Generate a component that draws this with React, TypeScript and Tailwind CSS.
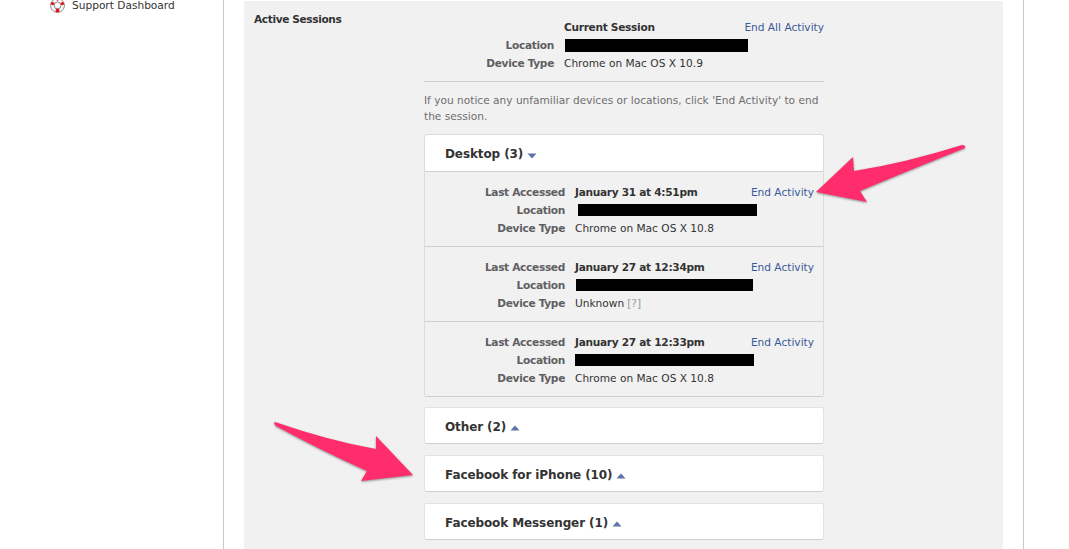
import React from "react";

const font = { fontFamily: '"DejaVu Sans", sans-serif' };

const Row = ({ label, children, labelW }: { label: string; children: React.ReactNode; labelW: string }) => (
  <div className="flex h-[18px] items-center">
    <div className={`${labelW} shrink-0 pr-[10px] text-right font-bold tracking-[-0.32px] text-[#5f5f63]`}>{label}</div>
    <div className="min-w-0 flex-1 text-[#333]">{children}</div>
  </div>
);

const Redacted = ({ w, ml, h = "h-[12px]" }: { w: string; ml: string; h?: string }) => (
  <div className={`${w} ${ml} ${h} bg-black`} />
);

const Caret = ({ up }: { up?: boolean }) => (
  <svg width="10" height="6" viewBox="0 0 10 6" className="ml-[4px] mt-[3px]">
    <path d={up ? "M5 0.5L9.5 5.5H0.5Z" : "M0.5 0.5H9.5L5 5.5Z"} fill="#5f73aa" />
  </svg>
);

const CardHeader = ({ title, up, h }: { title: string; up?: boolean; h: string }) => (
  <div className={`flex ${h} items-center pl-[20px] pt-[2px] text-[12px] font-bold tracking-[-0.1px] text-[#333]`}>
    {title}
    <Caret up={up} />
  </div>
);

const Session = ({
  when,
  redact,
  device,
  unknown,
  last,
}: {
  when: string;
  redact: React.ReactNode;
  device: string;
  unknown?: boolean;
  last?: boolean;
}) => (
  <div className={`relative pt-[11px] ${last ? "h-[74px]" : "h-[75px] border-b border-[#cfcfcf]"}`}>
    <Row label="Last Accessed" labelW="w-[150px]">
      <span className="font-bold tracking-[-0.3px]">{when}</span>
    </Row>
    <Row label="Location" labelW="w-[150px]">
      {redact}
    </Row>
    <Row label="Device Type" labelW="w-[150px]">
      {device}
      {unknown && <span className="ml-[3px] text-[#999]">[?]</span>}
    </Row>
    <a className="absolute right-[9px] top-[11px] leading-[18px] text-[#3b5998]">End Activity</a>
  </div>
);

export default function App() {
  return (
    <div className="relative flex h-[549px] w-[1069px] overflow-hidden bg-white text-[10.6px] leading-[18px]" style={font}>
      {/* sidebar */}
      <div className="w-[223px] shrink-0">
        <div className="-mt-[4px] ml-[50px] flex items-center">
          <svg width="15" height="15" viewBox="0 0 15 15">
            <circle cx="7.5" cy="7.5" r="5.2" fill="none" stroke="#fff" strokeWidth="3" />
            <circle cx="7.5" cy="7.5" r="6.9" fill="none" stroke="#555" strokeWidth="0.7" />
            <circle cx="7.5" cy="7.5" r="3.5" fill="none" stroke="#555" strokeWidth="0.7" />
            <g fill="#e8141c">
              <circle cx="7.5" cy="12.6" r="2" />
              <circle cx="2.6" cy="5.6" r="1.7" />
              <circle cx="12.4" cy="5.6" r="1.7" />
              <circle cx="7.5" cy="1.6" r="1.2" />
            </g>
          </svg>
          <span className="ml-[7px] text-[#333]">Support Dashboard</span>
        </div>
      </div>

      {/* main column */}
      <div className="w-[801px] shrink-0 border-x border-[#c8c8c8] px-[20px] pt-[1px]">
        <div className="flex h-[600px] bg-[#f1f1f1]">
          <div className="w-[180px] shrink-0 pl-[10px] pt-[9px] font-bold tracking-[-0.38px] text-[#333]">Active Sessions</div>

          <div className="w-[400px] shrink-0 pt-[17px]">
            {/* current session */}
            <div className="relative h-[54px]">
              <Row label="" labelW="w-[140px]">
                <span className="font-bold tracking-[-0.3px]">Current Session</span>
              </Row>
              <Row label="Location" labelW="w-[140px]">
                <Redacted w="w-[183px]" ml="ml-[1px]" h="h-[13px]" />
              </Row>
              <Row label="Device Type" labelW="w-[140px]">
                Chrome on Mac OS X 10.9
              </Row>
              <a className="absolute right-0 top-0 leading-[18px] text-[#3b5998]">End All Activity</a>
            </div>

            <div className="mt-[9px] border-t border-[#cfcfcf] pt-[10px] leading-[16px] text-[#6f6f6f]">
              If you notice any unfamiliar devices or locations, click 'End Activity' to end the session.
            </div>

            {/* desktop */}
            <div className="mt-[10px] w-[400px] rounded-[3px] border border-[#dcdcdc] border-b-[#cfcfcf] bg-white">
              <CardHeader title="Desktop (3)" h="h-[36px]" />
              <div className="border-t border-[#cfcfcf] bg-[#f1f1f1]">
                <Session
                  when="January 31 at 4:51pm"
                  redact={<Redacted w="w-[179px]" ml="ml-[3px]" />}
                  device="Chrome on Mac OS X 10.8"
                />
                <Session
                  when="January 27 at 12:34pm"
                  redact={<Redacted w="w-[177px]" ml="ml-[1px]" />}
                  device="Unknown"
                  unknown
                />
                <Session
                  when="January 27 at 12:33pm"
                  redact={<Redacted w="w-[179px]" ml="ml-0" />}
                  device="Chrome on Mac OS X 10.8"
                  last
                />
              </div>
            </div>

            <div className="mt-[10px] flex flex-col gap-[11px]">
              {["Other (2)", "Facebook for iPhone (10)", "Facebook Messenger (1)"].map((t) => (
                <div key={t} className="rounded-[3px] border border-[#e2e2e2] border-b-[#cfcfcf] bg-white">
                  <CardHeader title={t} up h="h-[35px]" />
                </div>
              ))}
            </div>
          </div>
        </div>
      </div>

      {/* annotation arrows */}
      <svg
        width="1069"
        height="549"
        viewBox="0 0 1069 549"
        className="pointer-events-none absolute left-0 top-0 drop-shadow-[0_1px_1px_rgba(0,0,0,0.4)]"
      >
        <path
          d="M816 192L853 157L854 171Q905 163 962 145Q966 145 965 148Q905 172 860 191L867 202Z"
          fill="#ff2d6b"
        />
        <path
          d="M275 422Q330 441 376 449L376 436L413 475L361 481L367 471Q320 450 276 426Q273 423 275 422Z"
          fill="#ff2d6b"
        />
      </svg>
    </div>
  );
}
